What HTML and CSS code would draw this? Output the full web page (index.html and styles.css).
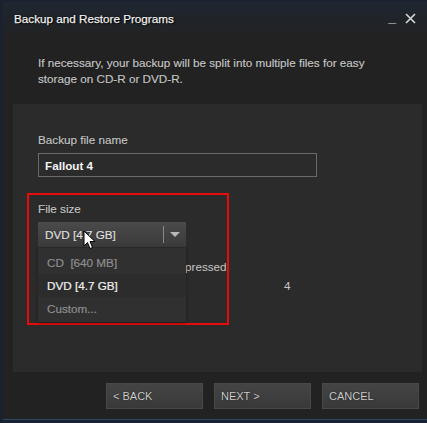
FILE: index.html
```html
<!DOCTYPE html>
<html lang="en">
<head>
    <meta charset="UTF-8">
    <meta name="viewport" content="width=device-width, initial-scale=1.0">
    <title>Backup and Restore Programs</title>
    <link rel="stylesheet" href="styles.css">
</head>
<body>
    <div class="window">
        <div class="titlebar">
            <span class="title">Backup and Restore Programs</span>
            <span class="controls">
                <span class="min">_</span>
                <svg class="close" width="11" height="11" viewBox="0 0 11 11">
                    <path d="M1 1 L10 10 M10 1 L1 10" stroke="#d8d8d8" stroke-width="1.6"/>
                </svg>
            </span>
        </div>

        <p class="intro">If necessary, your backup will be split into multiple files for easy storage on CD-R or DVD-R.</p>

        <div class="panel">
            <label class="field-label" for="fileName">Backup file name</label>
            <input class="text-input" type="text" id="fileName" value="Fallout 4">

            <div class="size-box">
                <div class="field-label">File size</div>
                <div class="combo">
                    <div class="combo-head">
                        <span>DVD [4.7 GB]</span>
                        <span class="combo-sep"></span>
                        <span class="combo-arrow"></span>
                    </div>
                    <ul class="combo-list">
                        <li class="dim">CD&nbsp; [640 MB]</li>
                        <li class="active">DVD [4.7 GB]</li>
                        <li class="dim">Custom...</li>
                    </ul>
                </div>
                <div class="hidden-row">Uncompressed</div>
                <div class="count-row">4</div>
                <!-- mouse pointer over the combo box -->
                <svg class="pointer" width="14" height="20" viewBox="0 0 14 20">
                    <path d="M1 1 L1 16 L4.5 12.5 L7 18.5 L9.5 17.5 L7 11.5 L12 11.5 Z" fill="#fff" stroke="#000" stroke-width="1"/>
                </svg>
            </div>
        </div>

        <div class="buttons">
            <button>&lt; BACK</button>
            <button>NEXT &gt;</button>
            <button>CANCEL</button>
        </div>
    </div>
</body>
</html>
```

FILE: styles.css
```css
body {
    margin: 0;
    background: #1a2230;
    font-family: "Liberation Sans", Arial, sans-serif;
    height: 423px;
    overflow: hidden;
}
.window {
    margin: 2px 0 0 3px;
    height: 417px;
    background: #222222;
    border-bottom: 1px solid #2c4a66;
    display: flex;
    flex-direction: column;
}
.titlebar {
    height: 36px;
    display: flex;
    align-items: center;
    justify-content: space-between;
    padding: 0 11px 0 11px;
    background: linear-gradient(#1e2631, #222 100%);
}
.title {
    color: #f0f0f0;
    font-size: 11.7px;
    -webkit-text-stroke: 0.25px #f0f0f0;
    text-shadow: 0 0 2px #000, 1px 1px 1px #000;
    margin-top: -4px;
}
.controls {
    display: flex;
    align-items: center;
    gap: 9px;
    margin-top: -4px;
}
.min {
    color: #d8d8d8;
    font-size: 14px;
    font-weight: bold;
    line-height: 11px;
    margin-top: -2px;
}
.intro {
    margin: 17px 0 0 35px;
    width: 345px;
    color: #c6c6c6;
    font-size: 11.7px;
    line-height: 16px;
    -webkit-text-stroke: 0.2px #c6c6c6;
    text-shadow: 0 0 1px #000;
}
.panel {
    margin: 17px 5px 0 10px;
    height: 268px;
    background: #2b2b2b;
    padding: 0 25px;
    box-sizing: border-box;
    padding-top: 29px;
}
.field-label {
    display: block;
    color: #c6c6c6;
    font-size: 11.7px;
    -webkit-text-stroke: 0.2px #c6c6c6;
    text-shadow: 0 0 1px #000;
}
.text-input {
    margin-top: 7px;
    width: 279px;
    height: 24px;
    box-sizing: border-box;
    background: #2b2b2b;
    border: 1px solid #6a6a6a;
    color: #f2f2f2;
    font-family: inherit;
    font-size: 11.7px;
    font-weight: bold;
    padding: 0 6px;
    display: block;
}
.size-box {
    position: relative;
    margin: 16px 0 0 -11px;
    width: 202px;
    height: 132px;
    box-sizing: border-box;
    border: 2px solid #e80b0b;
    padding: 7px 0 0 9px;
}
.combo {
    position: relative;
    margin-top: 7px;
    width: 148px;
}
.combo-head {
    height: 25px;
    display: flex;
    align-items: center;
    padding-left: 7px;
    background: linear-gradient(#4a4a4a, #3a3a3a);
    color: #e2e2e2;
    font-size: 11.7px;
    -webkit-text-stroke: 0.2px #e2e2e2;
    text-shadow: 0 0 1px #000;
}
.combo-head span:first-child {
    flex: 1;
}
.combo-sep {
    width: 1px;
    height: 17px;
    background: #8a8a8a;
    margin-right: 6px;
}
.combo-arrow {
    width: 0;
    height: 0;
    border-left: 5px solid transparent;
    border-right: 5px solid transparent;
    border-top: 5px solid #b8b8b8;
    margin-right: 6px;
}
.combo-list {
    position: absolute;
    top: 26px;
    left: 0;
    right: 0;
    z-index: 2;
    margin: 0;
    padding: 3px 0 2px;
    list-style: none;
    background: #303030;
    box-shadow: 0 1px 3px rgba(0, 0, 0, 0.4);
}
.combo-list li {
    height: 23px;
    line-height: 23px;
    padding-left: 9px;
    font-size: 11.7px;
    -webkit-text-stroke: 0.2px currentColor;
}
.combo-list .dim {
    color: #8e8e8e;
}
.combo-list .active {
    color: #f0f0f0;
    background: #2c2c2c;
}
.hidden-row {
    margin: 13px 0 0 110px;
    color: #c6c6c6;
    font-size: 11.7px;
}
.count-row {
    margin: 6px 0 0 246px;
    color: #c6c6c6;
    font-size: 11.7px;
    white-space: nowrap;
}
.pointer {
    position: absolute;
    left: 54px;
    top: 35px;
    z-index: 3;
}
.buttons {
    display: flex;
    justify-content: flex-end;
    gap: 11px;
    margin: 11px 8px 0 0;
}
.buttons button {
    width: 97px;
    height: 26px;
    background: linear-gradient(#444, #393939);
    border: 1px solid #484848;
    color: #cfcfcf;
    font-family: inherit;
    font-size: 11px;
    text-align: left;
    padding-left: 6px;
    text-shadow: 0 0 1px #000;
}
```
